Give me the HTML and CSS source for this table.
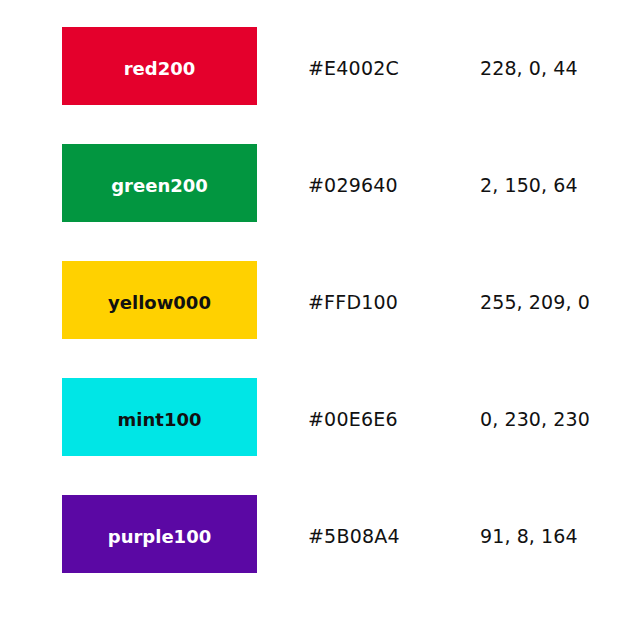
FILE: index.html
```html
<!DOCTYPE html>
<html>
<head>
<meta charset="utf-8">
<link rel="stylesheet" href="styles.css">
</head>
<body>
<div class="list">
  <div class="row">
    <div class="swatch red">red200</div>
    <div class="hex">#E4002C</div>
    <div class="rgb">228, 0, 44</div>
  </div>
  <div class="row">
    <div class="swatch green">green200</div>
    <div class="hex">#029640</div>
    <div class="rgb">2, 150, 64</div>
  </div>
  <div class="row">
    <div class="swatch yellow">yellow000</div>
    <div class="hex">#FFD100</div>
    <div class="rgb">255, 209, 0</div>
  </div>
  <div class="row">
    <div class="swatch mint">mint100</div>
    <div class="hex">#00E6E6</div>
    <div class="rgb">0, 230, 230</div>
  </div>
  <div class="row">
    <div class="swatch purple">purple100</div>
    <div class="hex">#5B08A4</div>
    <div class="rgb">91, 8, 164</div>
  </div>
</div>
</body>
</html>
```
FILE: styles.css
```css
html, body {
  margin: 0;
  padding: 0;
  background: #ffffff;
}
body {
  font-family: "DejaVu Sans", "Noto Sans", sans-serif;
  color: #111111;
}
.list {
  display: flex;
  flex-direction: column;
  gap: 39px;
  padding: 27px 0 0 62px;
}
.row {
  display: flex;
  align-items: center;
  height: 78px;
}
.swatch {
  width: 195px;
  height: 78px;
  display: flex;
  align-items: center;
  justify-content: center;
  font-size: 18px;
  font-weight: 700;
  color: #ffffff;
  padding-top: 5px;
  box-sizing: border-box;
}
.red { background: #E4002C; }
.green { background: #029640; }
.yellow { background: #FFD100; color: #111111; }
.mint { background: #00E6E6; color: #111111; }
.purple { background: #5B08A4; }
.hex {
  margin-left: 51px;
  width: 172px;
  font-size: 19px;
  letter-spacing: 0.2px;
  padding-top: 4px;
}
.rgb {
  font-size: 19px;
  letter-spacing: 0.1px;
  padding-top: 4px;
}
```
